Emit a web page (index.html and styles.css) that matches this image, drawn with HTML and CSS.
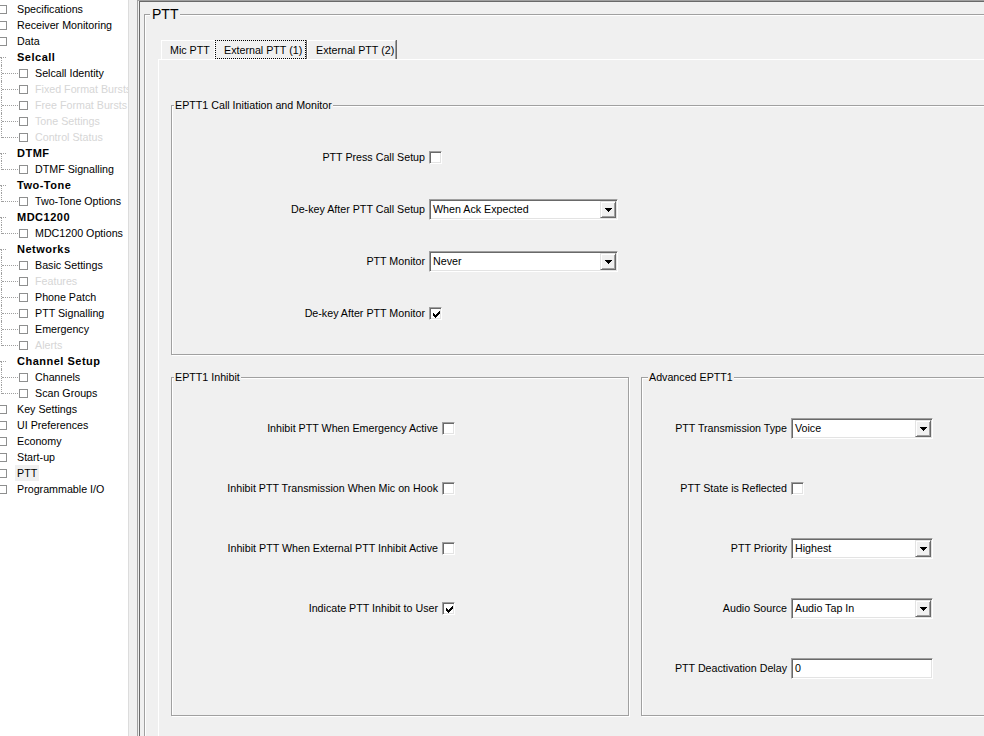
FILE: index.html
```html
<!DOCTYPE html>
<html>
<head>
<meta charset="utf-8">
<title>PTT</title>
<link rel="stylesheet" href="styles.css">
</head>
<body>
<div class="app">
  <div class="tree">
    <div class="trow top"><span class="tcb"></span><span class="tl">Specifications</span></div>
    <div class="trow top"><span class="tcb"></span><span class="tl">Receiver Monitoring</span></div>
    <div class="trow top"><span class="tcb"></span><span class="tl">Data</span></div>
    <div class="trow head"><span class="tl">Selcall</span></div>
    <div class="trow kid"><span class="tcb"></span><span class="tl">Selcall Identity</span></div>
    <div class="trow kid dis"><span class="tcb"></span><span class="tl">Fixed Format Bursts</span></div>
    <div class="trow kid dis"><span class="tcb"></span><span class="tl">Free Format Bursts</span></div>
    <div class="trow kid dis"><span class="tcb"></span><span class="tl">Tone Settings</span></div>
    <div class="trow kid dis last"><span class="tcb"></span><span class="tl">Control Status</span></div>
    <div class="trow head"><span class="tl">DTMF</span></div>
    <div class="trow kid last"><span class="tcb"></span><span class="tl">DTMF Signalling</span></div>
    <div class="trow head"><span class="tl">Two-Tone</span></div>
    <div class="trow kid last"><span class="tcb"></span><span class="tl">Two-Tone Options</span></div>
    <div class="trow head"><span class="tl">MDC1200</span></div>
    <div class="trow kid last"><span class="tcb"></span><span class="tl">MDC1200 Options</span></div>
    <div class="trow head"><span class="tl">Networks</span></div>
    <div class="trow kid"><span class="tcb"></span><span class="tl">Basic Settings</span></div>
    <div class="trow kid dis"><span class="tcb"></span><span class="tl">Features</span></div>
    <div class="trow kid"><span class="tcb"></span><span class="tl">Phone Patch</span></div>
    <div class="trow kid"><span class="tcb"></span><span class="tl">PTT Signalling</span></div>
    <div class="trow kid"><span class="tcb"></span><span class="tl">Emergency</span></div>
    <div class="trow kid dis last"><span class="tcb"></span><span class="tl">Alerts</span></div>
    <div class="trow head"><span class="tl">Channel Setup</span></div>
    <div class="trow kid"><span class="tcb"></span><span class="tl">Channels</span></div>
    <div class="trow kid last"><span class="tcb"></span><span class="tl">Scan Groups</span></div>
    <div class="trow top"><span class="tcb"></span><span class="tl">Key Settings</span></div>
    <div class="trow top"><span class="tcb"></span><span class="tl">UI Preferences</span></div>
    <div class="trow top"><span class="tcb"></span><span class="tl">Economy</span></div>
    <div class="trow top"><span class="tcb"></span><span class="tl">Start-up</span></div>
    <div class="trow top"><span class="tcb"></span><span class="tl sel">PTT</span></div>
    <div class="trow top"><span class="tcb"></span><span class="tl">Programmable I/O</span></div>
  </div>

  <div class="main">
    <div class="main-inner">
      <div class="group ptt">
        <div class="gtitle big">PTT</div>
        <div class="tabs">
          <div class="tab t1">Mic PTT</div>
          <div class="tab t2"><span class="focus">External PTT (1)</span></div>
          <div class="tab t3">External PTT (2)</div>
        </div>
        <div class="page">
          <div class="group g1">
            <div class="gtitle">EPTT1 Call Initiation and Monitor</div>
            <div class="form f1">
              <label>PTT Press Call Setup</label>
              <span class="cb"></span>
              <label>De-key After PTT Call Setup</label>
              <span class="combo c1"><span class="val">When Ack Expected</span><span class="btn"><svg width="7" height="4" viewBox="0 0 7 4" shape-rendering="crispEdges"><path d="M0 0h7v1h-1v1h-1v1h-1v1h-1v-1h-1v-1h-1v-1h-1z" fill="#000"/></svg></span></span>
              <label>PTT Monitor</label>
              <span class="combo c1"><span class="val">Never</span><span class="btn"><svg width="7" height="4" viewBox="0 0 7 4" shape-rendering="crispEdges"><path d="M0 0h7v1h-1v1h-1v1h-1v1h-1v-1h-1v-1h-1v-1h-1z" fill="#000"/></svg></span></span>
              <label>De-key After PTT Monitor</label>
              <span class="cb"><svg width="7" height="7" viewBox="0 0 7 7" shape-rendering="crispEdges"><path d="M6 0h1v1h-1zM5 1h2v1h-2zM0 2h1v1h-1zM4 2h3v1h-3zM0 3h2v1h-2zM3 3h3v1h-3zM0 4h5v1h-5zM1 5h3v1h-3zM2 6h1v1h-1z" fill="#000"/></svg></span>
            </div>
          </div>
          <div class="row2">
            <div class="group g2">
              <div class="gtitle">EPTT1 Inhibit</div>
              <div class="form f2">
                <label>Inhibit PTT When Emergency Active</label>
                <span class="cb"></span>
                <label>Inhibit PTT Transmission When Mic on Hook</label>
                <span class="cb"></span>
                <label>Inhibit PTT When External PTT Inhibit Active</label>
                <span class="cb"></span>
                <label>Indicate PTT Inhibit to User</label>
                <span class="cb"><svg width="7" height="7" viewBox="0 0 7 7" shape-rendering="crispEdges"><path d="M6 0h1v1h-1zM5 1h2v1h-2zM0 2h1v1h-1zM4 2h3v1h-3zM0 3h2v1h-2zM3 3h3v1h-3zM0 4h5v1h-5zM1 5h3v1h-3zM2 6h1v1h-1z" fill="#000"/></svg></span>
              </div>
            </div>
            <div class="group g3">
              <div class="gtitle">Advanced EPTT1</div>
              <div class="form f3">
                <label>PTT Transmission Type</label>
                <span class="combo c3"><span class="val">Voice</span><span class="btn"><svg width="7" height="4" viewBox="0 0 7 4" shape-rendering="crispEdges"><path d="M0 0h7v1h-1v1h-1v1h-1v1h-1v-1h-1v-1h-1v-1h-1z" fill="#000"/></svg></span></span>
                <label>PTT State is Reflected</label>
                <span class="cb"></span>
                <label>PTT Priority</label>
                <span class="combo c3"><span class="val">Highest</span><span class="btn"><svg width="7" height="4" viewBox="0 0 7 4" shape-rendering="crispEdges"><path d="M0 0h7v1h-1v1h-1v1h-1v1h-1v-1h-1v-1h-1v-1h-1z" fill="#000"/></svg></span></span>
                <label>Audio Source</label>
                <span class="combo c3"><span class="val">Audio Tap In</span><span class="btn"><svg width="7" height="4" viewBox="0 0 7 4" shape-rendering="crispEdges"><path d="M0 0h7v1h-1v1h-1v1h-1v1h-1v-1h-1v-1h-1v-1h-1z" fill="#000"/></svg></span></span>
                <label>PTT Deactivation Delay</label>
                <span class="text"><span class="val">0</span></span>
              </div>
            </div>
          </div>
        </div>
      </div>
    </div>
  </div>
</div>
</body>
</html>
```

FILE: styles.css
```css
* { box-sizing: border-box; }
html, body { margin: 0; padding: 0; }
body {
  width: 984px;
  height: 736px;
  overflow: hidden;
  background: #f0f0f0;
  font-family: "Liberation Sans", Arial, sans-serif;
  font-size: 10.7px;
  color: #000;
}
.app { display: flex; height: 736px; }

/* ---- tree ---- */
.tree {
  width: 129px;
  flex: none;
  background: #fff;
  border-right: 1px solid #dcdcdc;
  padding-top: 1px;
  overflow: hidden;
}
.trow {
  position: relative;
  height: 16px;
  display: flex;
  align-items: center;
  white-space: nowrap;
}
.tcb {
  flex: none;
  width: 9px;
  height: 9px;
  border: 1px solid #8e8f8f;
  background: #fff;
}
.top .tcb { margin-left: -2px; }
.top .tl { margin-left: 10px; }
.top .tl.sel {
  margin-left: 8px;
  padding: 0 2px;
  height: 16px;
  line-height: 16px;
  background: #f0f0f0;
}
.head {
  padding-left: 17px;
  font-weight: bold;
  font-size: 11px;
  letter-spacing: 0.5px;
}
.head::before {
  content: "";
  position: absolute;
  left: 0;
  top: 8px;
  width: 6px;
  border-top: 1px dotted #a0a0a0;
}
.head::after {
  content: "";
  position: absolute;
  left: 1px;
  top: 8px;
  bottom: 0;
  border-left: 1px dotted #a0a0a0;
}
.kid { padding-left: 19px; }
.kid .tl { margin-left: 7px; }
.kid::before {
  content: "";
  position: absolute;
  left: 2px;
  top: 8px;
  width: 16px;
  border-top: 1px dotted #a0a0a0;
}
.kid::after {
  content: "";
  position: absolute;
  left: 1px;
  top: 0;
  bottom: 0;
  border-left: 1px dotted #a0a0a0;
}
.kid.last::after { bottom: auto; height: 9px; }
.dis .tl { color: #d6d6d6; }

/* ---- main ---- */
.main {
  margin-left: 8px;
  flex: 1;
  min-width: 0;
  border-left: 1px solid #a0a0a0;
  border-top: 1px solid #a0a0a0;
  overflow: hidden;
}
.main-inner {
  height: 100%;
  margin-left: 1px;
  border-left: 1px solid #696969;
  border-top: 1px solid #696969;
  padding: 12px 0 0 4px;
}

.group {
  position: relative;
  flex: none;
  border: 1px solid #a0a0a0;
  box-shadow: inset 1px 1px 0 #fff, 1px 1px 0 #fff;
}
.gtitle {
  position: absolute;
  top: -7px;
  left: 2px;
  padding: 0 1px;
  line-height: 13px;
  background: #f0f0f0;
  white-space: nowrap;
}
.gtitle.big {
  font-size: 14px;
  line-height: 17px;
  top: -9px;
  left: 5px;
  padding: 0 2px;
}
.g3 .gtitle { left: 6px; }

.ptt {
  width: 900px;
  height: 780px;
  padding: 25px 0 0 13px;
}

/* ---- tabs ---- */
.tabs { display: flex; height: 19px; margin-left: 3px; }
.tab {
  height: 19px;
  display: flex;
  align-items: center;
  white-space: nowrap;
  border-top: 1px solid #fff;
  border-left: 1px solid #fff;
}
.t1 { width: 53px; padding-left: 8px; }
.t2 {
  width: 93px;
  border-top: none;
  border-right: 1px solid #696969;
}
.t2 .focus {
  flex: 1;
  height: 100%;
  display: flex;
  align-items: center;
  padding-left: 9px;
  outline: 1px dotted #000;
  outline-offset: -1px;
}
.t3 {
  width: 89px;
  padding-left: 8px;
  border-right: 1px solid #a0a0a0;
  box-shadow: 1px 0 0 #696969;
}
.page {
  border-top: 1px solid #fff;
  border-left: 1px solid #fff;
  padding: 45px 0 0 12px;
  height: 760px;
}

/* ---- groups ---- */
.g1 { width: 840px; height: 250px; padding-top: 25px; }
.row2 { display: flex; gap: 12px; margin-top: 22px; }
.g2 { width: 458px; height: 339px; padding-top: 20px; }
.g3 { width: 400px; height: 339px; padding-top: 20px; }

.form { display: grid; align-items: center; column-gap: 4px; }
.f1 { grid-template-columns: 253px auto; grid-auto-rows: 52px; }
.f2 { grid-template-columns: 266px auto; grid-auto-rows: 60px; }
.f3 { grid-template-columns: 145px auto; grid-auto-rows: 60px; }
.form label { justify-self: end; white-space: nowrap; }

/* ---- controls ---- */
.cb, .combo, .text {
  justify-self: start;
  background: #fff;
  border: 1px solid;
  border-color: #a0a0a0 #fff #fff #a0a0a0;
  box-shadow: inset 1px 1px 0 #696969, inset -1px -1px 0 #e3e3e3;
}
.cb {
  width: 13px;
  height: 13px;
  padding: 2px;
}
.cb svg { display: block; margin: 1px 0 0 1px; }
.combo, .text {
  height: 21px;
  display: flex;
  align-items: center;
  padding: 1px 1px 1px 3px;
  white-space: nowrap;
}
.c1 { width: 189px; }
.c3, .text { width: 142px; }
.combo .val, .text .val { flex: 1; }
.btn {
  flex: none;
  width: 16px;
  height: 17px;
  display: flex;
  align-items: center;
  justify-content: center;
  background: #f0f0f0;
  border: 1px solid;
  border-color: #e3e3e3 #696969 #696969 #e3e3e3;
  box-shadow: inset 1px 1px 0 #fff, inset -1px -1px 0 #a0a0a0;
}
.btn svg { display: block; margin-top: 1px; }
```
